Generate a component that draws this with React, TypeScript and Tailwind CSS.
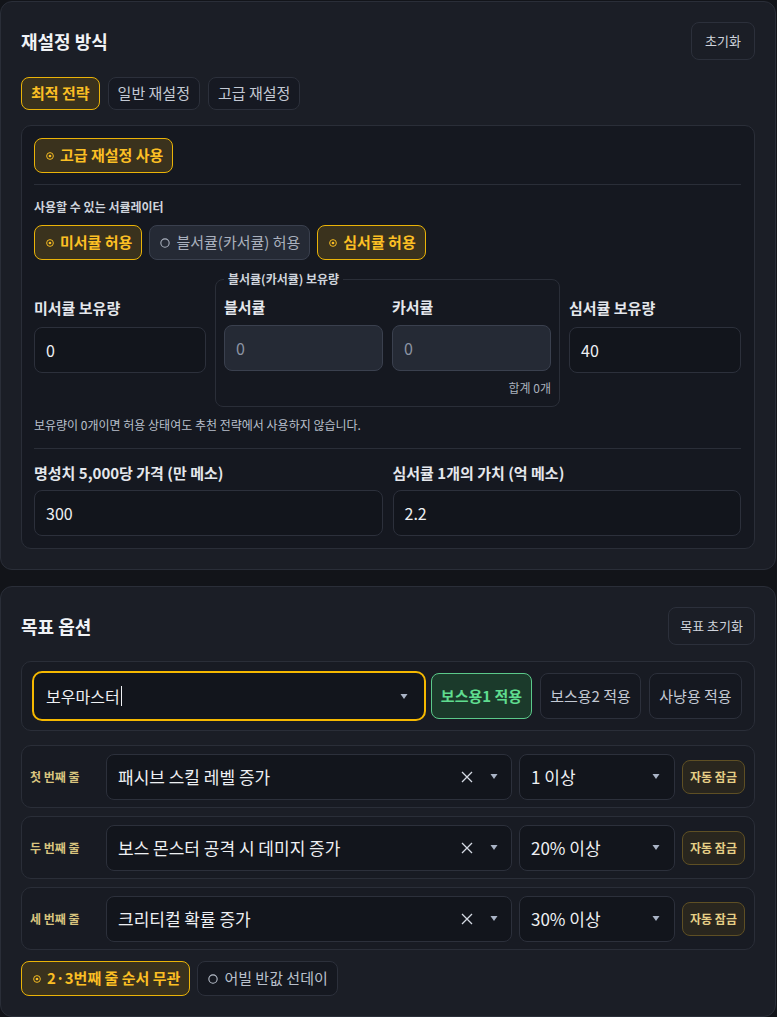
import React from "react";

// ── Small glyphs ───────────────────────────────────────────────────────────

const RadioOn = () => (
  <svg width="8" height="8" viewBox="0 0 10 10" className="shrink-0">
    <circle cx="5" cy="5" r="4.2" fill="none" stroke="currentColor" strokeWidth="1.2" />
    <circle cx="5" cy="5" r="1.7" fill="currentColor" />
  </svg>
);

const RadioOff = () => (
  <svg width="10" height="10" viewBox="0 0 12 12" className="shrink-0">
    <circle cx="6" cy="6" r="5" fill="none" stroke="currentColor" strokeWidth="1.3" />
  </svg>
);

const Caret = () => (
  <svg width="8" height="7" viewBox="0 0 8 7" className="shrink-0 text-[#aab4c6]">
    <path d="M0.5 1 H7.5 L4 6 Z" fill="currentColor" />
  </svg>
);

const Cross = () => (
  <svg width="12" height="12" viewBox="0 0 12 12" className="shrink-0 text-[#d5dae3]">
    <path d="M1 1 L11 11 M11 1 L1 11" stroke="currentColor" strokeWidth="1.3" />
  </svg>
);

// ── Buttons ────────────────────────────────────────────────────────────────

function Tab({ label, active }: { label: string; active?: boolean }) {
  return (
    <button
      className={
        active
          ? "h-[33px] px-[9px] whitespace-nowrap rounded-lg border border-[#eab308] bg-[#3a321d] text-[#fbbf24] font-bold text-[15px]"
          : "h-[33px] px-[9px] whitespace-nowrap rounded-lg border border-[#2c303b] bg-[#161922] text-[#c3c9d4] text-[15px]"
      }
    >
      {label}
    </button>
  );
}

function Toggle({
  label,
  active,
  dim,
}: {
  label: string;
  active?: boolean;
  dim?: boolean;
}) {
  if (active)
    return (
      <button className="h-[35px] pl-[11px] pr-[9px] whitespace-nowrap rounded-lg border border-[#eab308] bg-[#3a321d] text-[#fbbf24] font-bold text-[15px] flex items-center gap-[6px]">
        <RadioOn />
        {label}
      </button>
    );
  return (
    <button
      className={
        dim
          ? "h-[35px] pl-[10px] pr-[9px] whitespace-nowrap rounded-lg border border-[#2c303b] bg-[#151820] text-[#b9c0cc] text-[15px] flex items-center gap-[6px]"
          : "h-[35px] pl-[10px] pr-[9px] whitespace-nowrap rounded-lg border border-[#3a404e] bg-[#252a35] text-[#a9b0bd] text-[15px] flex items-center gap-[6px]"
      }
    >
      <RadioOff />
      {label}
    </button>
  );
}

function NumInput({ value, disabled }: { value: string; disabled?: boolean }) {
  return (
    <div
      className={
        disabled
          ? "h-[46px] rounded-lg border border-[#3a404e] bg-[#252a35] px-[11px] flex items-center text-[16px] text-[#8c94a4]"
          : "h-[46px] rounded-lg border border-[#2c303b] bg-[#12151c] px-[11px] flex items-center text-[16px] text-[#eef0f3]"
      }
    >
      {value}
    </div>
  );
}

function FieldLabel({ children }: { children: React.ReactNode }) {
  return <div className="text-[15px] font-bold text-[#e4e7ec] leading-5">{children}</div>;
}

// ── Option rows ────────────────────────────────────────────────────────────

function OptionRow({ label, option, amount }: { label: string; option: string; amount: string }) {
  return (
    <div className="h-[63px] rounded-[10px] border border-[#2a2e38] bg-[#181b23] pl-[8px] pr-[9px] flex items-center gap-[7px]">
      <div className="w-[69px] shrink-0 text-[12px] font-bold text-[#d8c47f]">{label}</div>
      <div className="flex-1 h-[46px] rounded-lg border border-[#2c303b] bg-[#12151c] pl-[11px] pr-[13px] flex items-center">
        <span className="flex-1 text-[17px] text-[#eef0f3]">{option}</span>
        <Cross />
        <span className="w-[17px]" />
        <Caret />
      </div>
      <div className="w-[156px] shrink-0 h-[46px] rounded-lg border border-[#2c303b] bg-[#12151c] pl-[11px] pr-[14px] flex items-center">
        <span className="flex-1 text-[17px] text-[#eef0f3]">{amount}</span>
        <Caret />
      </div>
      <button className="shrink-0 w-[63px] h-[34px] whitespace-nowrap rounded-lg border border-[#5e4f24] bg-[#29261e] text-[12px] font-bold text-[#e6cf86]">
        자동 잠금
      </button>
    </div>
  );
}

// ── App ────────────────────────────────────────────────────────────────────

export default function App() {
  return (
    <div
      className="min-h-screen bg-[#121419] pr-px pt-px pb-4 flex flex-col gap-[16px]"
      style={{ fontFamily: '"Noto Sans CJK KR", "Noto Sans", sans-serif' }}
    >
      {/* 재설정 방식 */}
      <section className="rounded-xl border border-[#2a2e38] bg-[#1b1e26] px-[20px] pt-[20px] pb-[20px]">
        <div className="flex items-center justify-between">
          <h2 className="text-[18px] font-bold text-[#f1f3f6]">재설정 방식</h2>
          <button className="h-[38px] px-[13px] rounded-lg border border-[#2c303b] bg-[#1b1e26] text-[13px] text-[#cfd4dc]">
            초기화
          </button>
        </div>

        <div className="mt-[17px] flex gap-[8px]">
          <Tab label="최적 전략" active />
          <Tab label="일반 재설정" />
          <Tab label="고급 재설정" />
        </div>

        <div className="mt-[15px] rounded-[10px] border border-[#2a2e38] bg-[#151820] pl-[12px] pr-[13px] pt-[12px] pb-[12px]">
          <div className="flex">
            <Toggle label="고급 재설정 사용" active />
          </div>
          <div className="mt-[11px] h-px bg-[#2a2e38]" />

          <div className="mt-[14px] text-[12px] font-semibold text-[#cfd4dc] leading-4">
            사용할 수 있는 서큘레이터
          </div>
          <div className="mt-[10px] flex gap-[7px]">
            <Toggle label="미서큘 허용" active />
            <Toggle label="블서큘(카서큘) 허용" />
            <Toggle label="심서큘 허용" active />
          </div>

          <div className="mt-[11px] grid grid-cols-[172px_1fr_172px] gap-[9px] items-start">
            <div className="mt-[27px] flex flex-col gap-[9px]">
              <FieldLabel>미서큘 보유량</FieldLabel>
              <NumInput value="0" />
            </div>
            <fieldset className="rounded-lg border border-[#2a2e38] px-[8px] pb-[10px]">
              <legend className="px-[4px] text-[12px] font-semibold text-[#cfd4dc] leading-4">
                블서큘(카서큘) 보유량
              </legend>
              <div className="mt-[10px] grid grid-cols-2 gap-[9px]">
                <div className="flex flex-col gap-[8px]">
                  <FieldLabel>블서큘</FieldLabel>
                  <NumInput value="0" disabled />
                </div>
                <div className="flex flex-col gap-[8px]">
                  <FieldLabel>카서큘</FieldLabel>
                  <NumInput value="0" disabled />
                </div>
              </div>
              <div className="mt-[9px] text-right text-[12px] text-[#aab1bd] leading-4">합계 0개</div>
            </fieldset>
            <div className="mt-[27px] flex flex-col gap-[9px]">
              <FieldLabel>심서큘 보유량</FieldLabel>
              <NumInput value="40" />
            </div>
          </div>

          <p className="mt-[10px] text-[12px] text-[#b9c0cc] leading-4">
            보유량이 0개이면 허용 상태여도 추천 전략에서 사용하지 않습니다.
          </p>
          <div className="mt-[15px] h-px bg-[#2a2e38]" />

          <div className="mt-[14px] grid grid-cols-2 gap-[10px]">
            <div className="flex flex-col gap-[7px]">
              <FieldLabel>명성치 5,000당 가격 (만 메소)</FieldLabel>
              <NumInput value="300" />
            </div>
            <div className="flex flex-col gap-[7px]">
              <FieldLabel>심서큘 1개의 가치 (억 메소)</FieldLabel>
              <NumInput value="2.2" />
            </div>
          </div>
        </div>
      </section>

      {/* 목표 옵션 */}
      <section className="rounded-xl border border-[#2a2e38] bg-[#1b1e26] px-[20px] pt-[20px] pb-[20px]">
        <div className="flex items-center justify-between">
          <h2 className="text-[18px] font-bold text-[#f1f3f6]">목표 옵션</h2>
          <button className="h-[38px] px-[11px] rounded-lg border border-[#2c303b] bg-[#1b1e26] text-[13px] text-[#cfd4dc]">
            목표 초기화
          </button>
        </div>

        <div className="mt-[16px] rounded-[10px] border border-[#2a2e38] bg-[#181b23] px-[10px] py-[9px] flex items-center">
          <div className="w-[394px] shrink-0 h-[50px] rounded-[10px] border-2 border-[#f5b800] bg-[#12151c] pl-[12px] pr-[16px] flex items-center">
            <span className="text-[16px] text-[#eef0f3]">보우마스터</span>
            <span className="w-px h-[20px] bg-[#eef0f3] ml-[1px]" />
            <span className="flex-1" />
            <Caret />
          </div>
          <button className="ml-[5px] w-[101px] shrink-0 h-[46px] whitespace-nowrap rounded-lg border border-[#5bc98a] bg-[#1b3a2b] text-[15px] font-bold text-[#5fdc8f]">
            보스용1 적용
          </button>
          <button className="ml-[8px] w-[101px] shrink-0 h-[46px] whitespace-nowrap rounded-lg border border-[#2c303b] bg-[#151820] text-[15px] text-[#c3c9d4]">
            보스용2 적용
          </button>
          <button className="ml-[8px] w-[93px] shrink-0 h-[46px] whitespace-nowrap rounded-lg border border-[#2c303b] bg-[#151820] text-[15px] text-[#c3c9d4]">
            사냥용 적용
          </button>
        </div>

        <div className="mt-[14px] flex flex-col gap-[8px]">
          <OptionRow label="첫 번째 줄" option="패시브 스킬 레벨 증가" amount="1 이상" />
          <OptionRow label="두 번째 줄" option="보스 몬스터 공격 시 데미지 증가" amount="20% 이상" />
          <OptionRow label="세 번째 줄" option="크리티컬 확률 증가" amount="30% 이상" />
        </div>

        <div className="mt-[11px] flex gap-[7px]">
          <Toggle label="2·3번째 줄 순서 무관" active />
          <Toggle label="어빌 반값 선데이" dim />
        </div>
      </section>
    </div>
  );
}
